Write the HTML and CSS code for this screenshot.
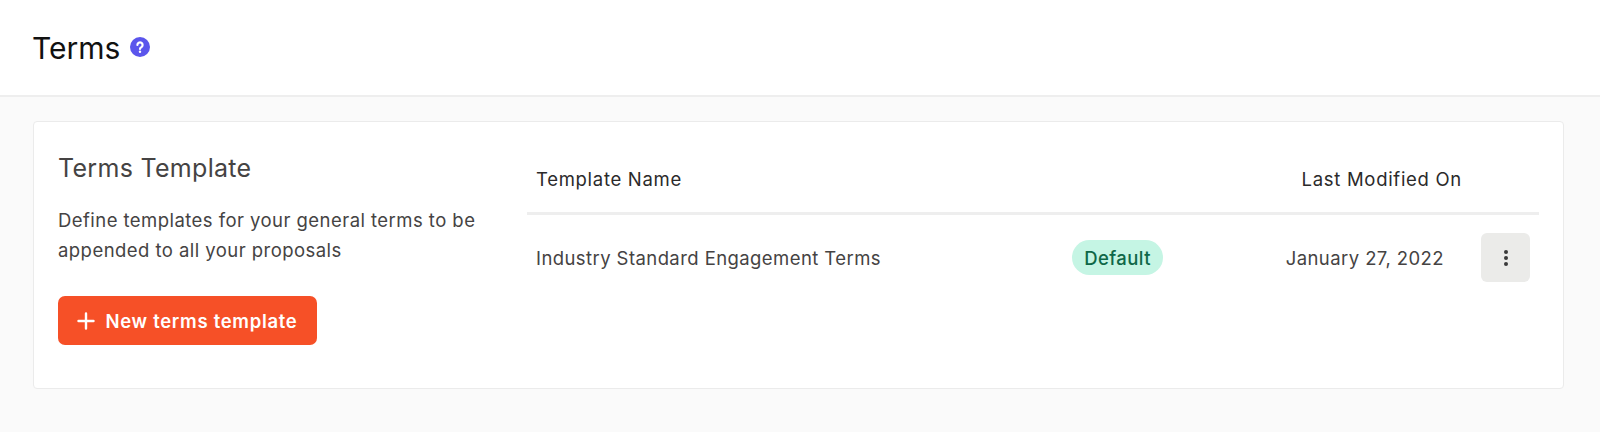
FILE: index.html
```html
<!DOCTYPE html>
<html lang="en">
<head>
    <meta charset="UTF-8">
    <meta name="viewport" content="width=device-width, initial-scale=1.0">
    <title>Terms</title>
    <link rel="stylesheet" href="styles.css">
</head>
<body>
    <header class="page-header">
        <h1>Terms</h1>
        <svg class="help-icon" viewBox="0 0 20 20" width="20" height="20">
            <circle cx="10" cy="10" r="10" fill="#5b55ec"/>
            <path d="M7.4 8a2.6 2.6 0 1 1 3.9 2.3c-.8.4-1.3.9-1.3 1.6" fill="none" stroke="#fff" stroke-width="2.2" stroke-linecap="round"/>
            <circle cx="10" cy="14.8" r="1.2" fill="#fff"/>
        </svg>
    </header>
    <main class="content">
        <section class="card">
            <div class="intro">
                <h2>Terms Template</h2>
                <p>Define templates for your general terms to be appended to all your proposals</p>
                <button class="new-btn" type="button">
                    <svg viewBox="0 0 18 18" width="18" height="18">
                        <path d="M9 1.5v15M1.5 9h15" stroke="#fff" stroke-width="2.4" stroke-linecap="round"/>
                    </svg>
                    New terms template
                </button>
            </div>
            <div class="templates">
                <div class="table-head">
                    <span>Template Name</span>
                    <span>Last Modified On</span>
                </div>
                <div class="table-row">
                    <span class="name">Industry Standard Engagement Terms</span>
                    <span class="badge">Default</span>
                    <span class="date">January 27, 2022</span>
                    <button class="menu-btn" type="button">
                        <svg viewBox="0 0 6 18" width="6" height="18">
                            <circle cx="3" cy="3" r="2" fill="#3a3a3a"/>
                            <circle cx="3" cy="9" r="2" fill="#3a3a3a"/>
                            <circle cx="3" cy="15" r="2" fill="#3a3a3a"/>
                        </svg>
                    </button>
                </div>
            </div>
        </section>
    </main>
</body>
</html>
```

FILE: styles.css
```css
* {
    box-sizing: border-box;
}
body {
    margin: 0;
    height: 432px;
    overflow: hidden;
    font-family: Inter, "Liberation Sans", sans-serif;
    background-color: #fafafa;
    color: #454343;
}
.page-header {
    height: 97px;
    padding: 0 32px;
    display: flex;
    align-items: center;
    gap: 10px;
    background-color: white;
    border-bottom: 2px solid #eeeeee;
}
.page-header h1 {
    margin: 0;
    font-size: 30px;
    font-weight: 400;
    color: #111;
}
.help-icon {
    margin-bottom: 2px;
}
.content {
    padding: 24px 36px 0 33px;
}
.card {
    height: 268px;
    padding: 0 24px;
    display: flex;
    background-color: white;
    border: 1px solid #ebebeb;
    border-radius: 4px;
}
.intro {
    width: 469px;
    flex-shrink: 0;
    padding-top: 31px;
}
.intro h2 {
    margin: 0;
    font-size: 25px;
    line-height: 30px;
    font-weight: 400;
    letter-spacing: .3px;
}
.intro p {
    margin: 22px 0 0;
    font-size: 18.5px;
    line-height: 30px;
    letter-spacing: .45px;
    width: 440px;
}
.new-btn {
    margin: 31px 0 0;
    width: 259px;
    height: 49px;
    display: flex;
    align-items: center;
    justify-content: center;
    gap: 10px;
    background-color: #f65027;
    color: white;
    border: none;
    border-radius: 7px;
    font-family: inherit;
    font-size: 18.5px;
    font-weight: 600;
    letter-spacing: .7px;
}
.templates {
    flex: 1;
    min-width: 0;
    font-size: 18.5px;
    letter-spacing: .42px;
}
.table-head {
    height: 93px;
    padding: 24px 77px 0 9px;
    display: flex;
    align-items: center;
    justify-content: space-between;
    border-bottom: 3px solid #eeeeee;
    letter-spacing: .7px;
    color: #2b2a2a;
}
.table-row {
    height: 85px;
    padding: 0 9px;
    display: flex;
    align-items: center;
}
.name {
    width: 536px;
}
.badge {
    width: 91px;
    height: 35px;
    display: flex;
    align-items: center;
    justify-content: center;
    background-color: #c5f5e4;
    color: #0f6848;
    border-radius: 18px;
    font-weight: 450;
}
.date {
    width: 281px;
    text-align: right;
}
.menu-btn {
    width: 49px;
    height: 49px;
    margin-left: 37px;
    display: flex;
    align-items: center;
    justify-content: center;
    background-color: #ebebe9;
    border: none;
    border-radius: 6px;
}
```
